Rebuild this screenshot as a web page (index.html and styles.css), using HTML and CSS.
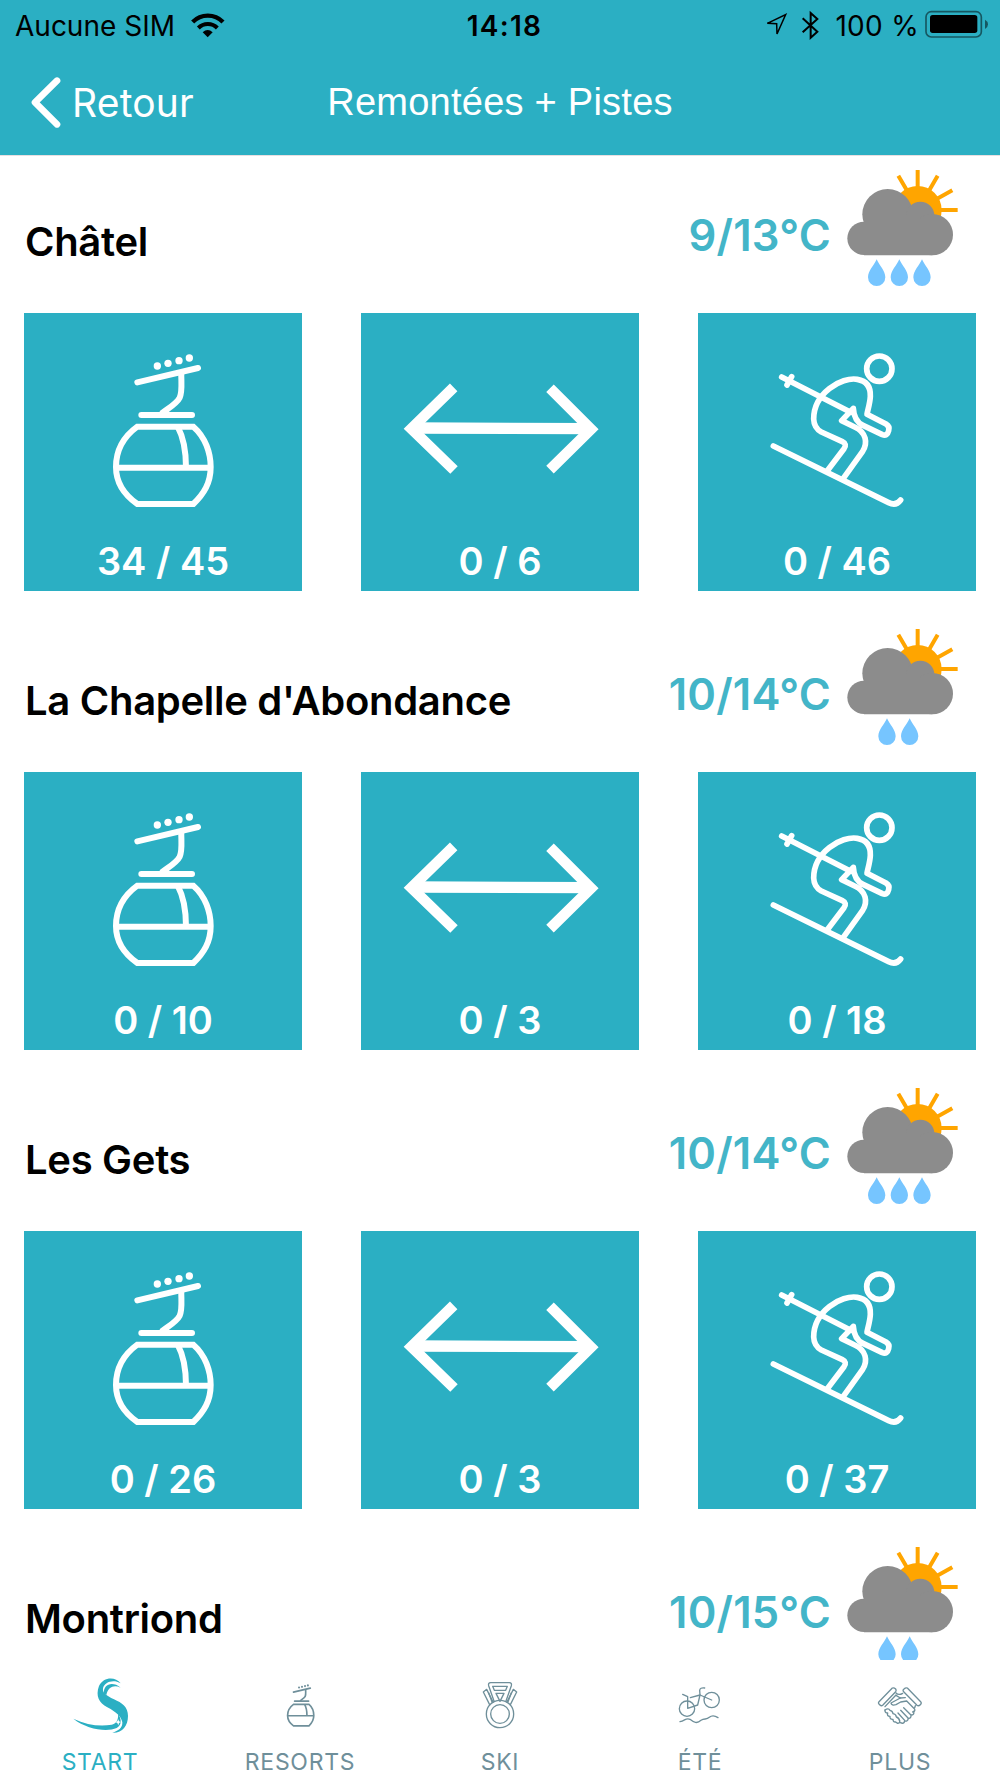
FILE: index.html
```html
<!DOCTYPE html>
<html lang="fr">
<head>
    <meta charset="UTF-8">
    <meta name="viewport" content="width=device-width, initial-scale=1.0">
    <title>Remontées + Pistes</title>
    <link rel="stylesheet" href="styles.css">
</head>
<body>
    <!-- Icônes partagées -->
    <svg class="sprite" width="0" height="0">
        <symbol id="gondola" viewBox="0 0 834 600">
            <g fill="currentColor">
                <circle cx="400" cy="159" r="11"/>
                <circle cx="432" cy="151" r="11"/>
                <circle cx="465" cy="143" r="11"/>
                <circle cx="496" cy="135" r="11"/>
            </g>
            <use href="#gondola-lines"/>
        </symbol>
        <symbol id="gondola-small" viewBox="53 -10 715 715">
            <g fill="currentColor">
                <circle cx="400" cy="159" r="11"/>
                <circle cx="432" cy="151" r="11"/>
                <circle cx="465" cy="143" r="11"/>
                <circle cx="496" cy="135" r="11"/>
            </g>
            <use href="#gondola-lines"/>
        </symbol>
        <g id="gondola-lines" fill="none" stroke="currentColor" stroke-width="18">
            <path d="M340 208 522 165M352 306H504" stroke-linecap="round"/>
            <path d="M472 178C471 205 476 235 467 254C459 271 434 285 412 302"/>
            <path d="M340 341H508C544 372 560 420 560 462C560 510 540 542 508 573H340C300 545 276 510 276 462C276 412 300 370 340 341Z"/>
            <path d="M276 464H560M461 341C482 380 486 420 486 464"/>
        </g>
        <symbol id="arrows" viewBox="0 0 834 600">
            <g fill="none" stroke="currentColor" stroke-width="32">
                <path d="M278 223 151 347 279 471M567 226 690 349 567 470"/>
                <path d="M151 345 690 347" stroke-width="34"/>
            </g>
        </symbol>
        <symbol id="skier" viewBox="0 0 834 600">
            <g fill="none" stroke="currentColor" stroke-width="17" stroke-linecap="round" stroke-linejoin="round">
                <circle cx="544" cy="167" r="38"/>
                <path d="M226 399 572 569Q594 580 608 561"/>
                <path d="M251 192 458 298M281 191 267 216"/>
                <path d="M388 473 438 407Q448 393 433 386L370 357Q348 345 347 318C347 240 430 191 478 199C508 204 518 225 517 250C516 272 509 290 507 304L564 333Q576 340 572 353Q568 370 553 365L495 337Q468 324 466 286L431 323 470 342C505 358 510 390 494 415L436 496"/>
            </g>
        </symbol>
        <symbol id="cloud-sun" viewBox="0 0 345 375">
            <circle cx="218" cy="135" r="72" fill="#ffa500"/>
            <path d="M218 15V70M160 32 185 75M278 32 252 77M322 76 275 102M338 135H280" stroke="#ffa500" stroke-width="12"/>
            <g fill="#8c8c8c">
                <circle cx="57" cy="220" r="50"/>
                <circle cx="128" cy="148" r="76"/>
                <circle cx="226" cy="152" r="42"/>
                <circle cx="262" cy="209" r="62"/>
                <path d="M57 190H100V148H226V209H262V271H57Z"/>
            </g>
        </symbol>
        <symbol id="drop" viewBox="0 0 52 80" overflow="visible">
            <path d="M26 0C34 19 52 34 52 54A26 26 0 0 1 0 54C0 34 18 19 26 0Z" fill="#76c5ff"/>
        </symbol>
    </svg>

    <header class="header">
        <div class="status-bar">
            <div class="status-left">
                <span class="carrier">Aucune SIM</span>
                <svg class="wifi" viewBox="570 30 108 81">
                    <path d="M578 63A64 64 0 0 1 669 63" fill="none" stroke="#000" stroke-width="13"/>
                    <path d="M595 81A40 40 0 0 1 652 81" fill="none" stroke="#000" stroke-width="12"/>
                    <path d="M623 109 608 94Q623 80 638 94Z"/>
                </svg>
            </div>
            <div class="clock">14:18</div>
            <div class="status-right">
                <svg class="location" viewBox="792 36 72 78" fill="none" stroke="#000" stroke-width="4.5">
                    <path d="M802 70 857 44 831 102 830 71Z"/>
                </svg>
                <svg class="bluetooth" viewBox="903 28 57 93" fill="none" stroke="#000" stroke-width="6">
                    <path d="M908 53 952 93 932 111V37L952 55 908 95"/>
                </svg>
                <span class="percent">100 %</span>
                <svg class="battery" viewBox="1275 30 192 84">
                    <rect x="1278" y="35" width="166" height="76" rx="16" fill="none" stroke="#000" stroke-opacity=".5" stroke-width="5"/>
                    <rect x="1290" y="45" width="142" height="54" rx="8"/>
                    <path d="M1455 59Q1464 64 1464 73T1455 87Z" fill-opacity=".5"/>
                </svg>
            </div>
        </div>
        <nav class="nav-bar">
            <a class="back">
                <svg viewBox="90 227 96 159" fill="none" stroke="#fff" stroke-width="20" stroke-linecap="round" stroke-linejoin="round">
                    <path d="M171 241 105 306 171 372"/>
                </svg>
                <span>Retour</span>
            </a>
            <h1>Remontées + Pistes</h1>
        </nav>
    </header>

    <main class="resorts">
        <section class="resort">
            <div class="resort-head">
                <h2>Châtel</h2>
                <span class="temp">9/13°C</span>
                <svg class="weather" viewBox="0 0 345 375">
                    <use href="#cloud-sun" width="345" height="375"/>
                    <use href="#drop" x="69" y="283" width="52" height="80"/>
                    <use href="#drop" x="137" y="283" width="52" height="80"/>
                    <use href="#drop" x="205" y="283" width="52" height="80"/>
                </svg>
            </div>
            <div class="tiles">
                <div class="tile"><svg><use href="#gondola"/></svg><span>34 / 45</span></div>
                <div class="tile"><svg><use href="#arrows"/></svg><span>0 / 6</span></div>
                <div class="tile"><svg><use href="#skier"/></svg><span>0 / 46</span></div>
            </div>
        </section>

        <section class="resort">
            <div class="resort-head">
                <h2>La Chapelle d'Abondance</h2>
                <span class="temp">10/14°C</span>
                <svg class="weather" viewBox="0 0 345 375">
                    <use href="#cloud-sun" width="345" height="375"/>
                    <use href="#drop" x="100" y="283" width="52" height="80"/>
                    <use href="#drop" x="168" y="283" width="52" height="80"/>
                </svg>
            </div>
            <div class="tiles">
                <div class="tile"><svg><use href="#gondola"/></svg><span>0 / 10</span></div>
                <div class="tile"><svg><use href="#arrows"/></svg><span>0 / 3</span></div>
                <div class="tile"><svg><use href="#skier"/></svg><span>0 / 18</span></div>
            </div>
        </section>

        <section class="resort">
            <div class="resort-head">
                <h2>Les Gets</h2>
                <span class="temp">10/14°C</span>
                <svg class="weather" viewBox="0 0 345 375">
                    <use href="#cloud-sun" width="345" height="375"/>
                    <use href="#drop" x="69" y="283" width="52" height="80"/>
                    <use href="#drop" x="137" y="283" width="52" height="80"/>
                    <use href="#drop" x="205" y="283" width="52" height="80"/>
                </svg>
            </div>
            <div class="tiles">
                <div class="tile"><svg><use href="#gondola"/></svg><span>0 / 26</span></div>
                <div class="tile"><svg><use href="#arrows"/></svg><span>0 / 3</span></div>
                <div class="tile"><svg><use href="#skier"/></svg><span>0 / 37</span></div>
            </div>
        </section>

        <section class="resort">
            <div class="resort-head">
                <h2>Montriond</h2>
                <span class="temp">10/15°C</span>
                <svg class="weather" viewBox="0 0 345 375">
                    <use href="#cloud-sun" width="345" height="375"/>
                    <use href="#drop" x="100" y="283" width="52" height="80"/>
                    <use href="#drop" x="168" y="283" width="52" height="80"/>
                </svg>
            </div>
        </section>
    </main>

    <footer class="tab-bar">
        <a class="tab active">
            <svg viewBox="201 96 198 198" fill="currentColor">
                <path d="M362 130C346 109 310 110 297 138C286 168 297 188 322 202C350 217 364 230 367 247C368 264 355 273 337 278C366 280 384 258 384 228C384 200 366 189 342 178C318 167 307 158 309 145C313 126 340 117 362 130Z"/>
                <path d="M312 161C309 134 336 122 362 143C342 134 325 140 319 165Z"/>
                <path d="M220 236C260 268 320 277 350 264C366 256 365 236 354 222C356 240 348 251 335 254C300 260 260 255 220 236Z"/>
                <path d="M355 238 357 244 363 246 357 249 355 256 352 249 346 246 352 244Z" fill="#fff"/>
            </svg>
            <span>START</span>
        </a>
        <a class="tab">
            <svg><use href="#gondola-small"/></svg>
            <span>RESORTS</span>
        </a>
        <a class="tab">
            <svg viewBox="81 96 198 198" fill="none" stroke="currentColor" stroke-width="4" stroke-linejoin="round">
                <circle cx="180" cy="222" r="41"/>
                <circle cx="180" cy="222" r="28"/>
                <path d="M163 186 146 137Q144 128 152 128H208Q216 128 214 137L197 186"/>
                <path d="M158 139H202L197 151H163ZM168 160H192L180 184Z"/>
                <path d="M150 196 130 156 140 148 160 188M210 196 230 156 220 148 200 188"/>
                <path d="M146 158 157 188M214 158 203 188"/>
            </svg>
            <span>SKI</span>
        </a>
        <a class="tab">
            <svg viewBox="681 96 198 198" fill="none" stroke="currentColor" stroke-width="4" stroke-linecap="round" stroke-linejoin="round">
                <circle cx="741" cy="206" r="23"/>
                <circle cx="815" cy="180" r="23"/>
                <path d="M728 163 743 170V205L773 195 780 165 751 173"/>
                <path d="M815 180 780 165 779 151Q780 142 794 144"/>
                <path d="M720 245C735 243 737 232 750 238C762 248 771 252 783 241C794 233 798 241 808 232C816 225 825 227 834 233"/>
            </svg>
            <span>ÉTÉ</span>
        </a>
        <a class="tab">
            <svg viewBox="681 396 198 198" fill="none" stroke="currentColor" stroke-width="4" stroke-linecap="round" stroke-linejoin="round">
                <path d="M717 485 757 444Q762 442 767 447 770 451 767 455L728 496Q724 499 719 494 713 489 717 485Z"/>
                <path d="M842 485 802 444Q797 442 792 447 787 451 791 455L831 496Q836 499 841 494 846 489 842 485Z"/>
                <path d="M768 459Q776 467 788 460M768 465 735 500M796 473 781 474 768 466"/>
                <path d="M781 474 753 489Q755 498 768 494L782 486 800 483 823 506Q828 513 818 516"/>
                <path d="M824 503 826 497M735 510Q734 519 743 519 740 529 750 529 749 539 759 538 759 547 767 546L773 550Q780 550 779 543"/>
                <path d="M781 548Q792 553 794 543 803 545 805 535 814 536 813 525 824 525 821 514"/>
                <path d="M791 503 812 524M782 511 804 534M774 519 794 541"/>
                <path d="M735 510Q745 503 750 511 758 513 759 521 768 522 769 531 777 533 779 543"/>
            </svg>
            <span>PLUS</span>
        </a>
    </footer>
</body>
</html>
```
FILE: styles.css
```css
:root {
    --teal: #2bafc3;
    --teal-light: #43b5c8;
    --grey: #6f8f9a;
}

* {
    box-sizing: border-box;
    margin: 0;
    padding: 0;
}

body {
    display: flex;
    flex-direction: column;
    height: 1778px;
    overflow: hidden;
    background-color: #fff;
    color: #000;
    font-family: Inter, "Liberation Sans", sans-serif;
}

svg {
    display: block;
    flex-shrink: 0;
}

.sprite {
    position: absolute;
}

/* En-tête */
.header {
    flex: none;
    height: 155px;
    background-color: var(--teal);
    box-shadow: 0 1px 0 #e8dfe1;
}

.status-bar {
    display: grid;
    grid-template-columns: 1fr auto 1fr;
    align-items: center;
    height: 52px;
    padding: 0 11px 0 15px;
    font-size: 28px;
    line-height: 52px;
}

.status-left,
.status-right {
    display: flex;
    align-items: center;
}

.status-right {
    justify-content: flex-end;
}

.wifi {
    width: 36px;
    height: 27px;
    margin-left: 15px;
    margin-bottom: 4px;
}

.clock {
    padding-left: 5px;
    font-weight: 600;
    letter-spacing: 1.3px;
}

.location {
    width: 24px;
    height: 26px;
    margin-right: 13px;
    margin-bottom: 2px;
}

.bluetooth {
    width: 19px;
    height: 31px;
    margin-right: 15px;
    margin-bottom: 2px;
}

.percent {
    letter-spacing: 0.3px;
}

.battery {
    width: 64px;
    height: 28px;
    margin-left: 6px;
    margin-bottom: 4px;
}

.nav-bar {
    display: grid;
    grid-template-columns: 1fr auto 1fr;
    align-items: center;
    height: 100px;
    padding: 0 30px;
    color: #fff;
}

.nav-bar h1 {
    font-family: "Liberation Sans", sans-serif;
    font-size: 38px;
    font-weight: 400;
    letter-spacing: 0.25px;
}

.back {
    display: flex;
    align-items: center;
    gap: 10px;
    font-size: 39px;
    letter-spacing: 0.2px;
}

.back svg {
    width: 32px;
    height: 53px;
}

/* Stations */
.resorts {
    flex: 1;
    min-height: 0;
    overflow: hidden;
    padding: 0 24px;
}

.resort {
    height: 459px;
}

.resort-head {
    display: flex;
    align-items: flex-start;
    height: 158px;
    padding: 10px 16px 0 1px;
}

.resort-head h2 {
    flex: 1;
    margin-top: 52px;
    font-size: 40px;
    font-weight: 600;
    letter-spacing: -0.3px;
    line-height: 50px;
    white-space: nowrap;
}

.temp {
    margin-top: 45px;
    color: var(--teal-light);
    font-size: 43.5px;
    font-weight: 600;
    letter-spacing: 0.2px;
    line-height: 50px;
}

.weather {
    width: 115px;
    height: 125px;
    margin-left: 14px;
}

.tiles {
    display: flex;
    justify-content: space-between;
}

.tile {
    width: 278px;
    height: 278px;
    background-color: var(--teal);
    color: #fff;
    text-align: center;
}

.tile svg {
    width: 278px;
    height: 200px;
}

.tile span {
    display: block;
    margin-top: 23px;
    font-size: 38px;
    font-weight: 600;
    line-height: 50px;
}

/* Barre d'onglets */
.tab-bar {
    display: grid;
    grid-template-columns: repeat(5, 1fr);
    flex: none;
    height: 118px;
    padding-top: 12px;
    color: var(--grey);
}

.tab {
    display: flex;
    flex-direction: column;
    align-items: center;
    font-size: 23px;
    letter-spacing: 0.7px;
}

.tab svg {
    width: 66px;
    height: 66px;
}

.tab span {
    margin-top: 9px;
    line-height: 30px;
}

.active {
    color: var(--teal);
}
```
